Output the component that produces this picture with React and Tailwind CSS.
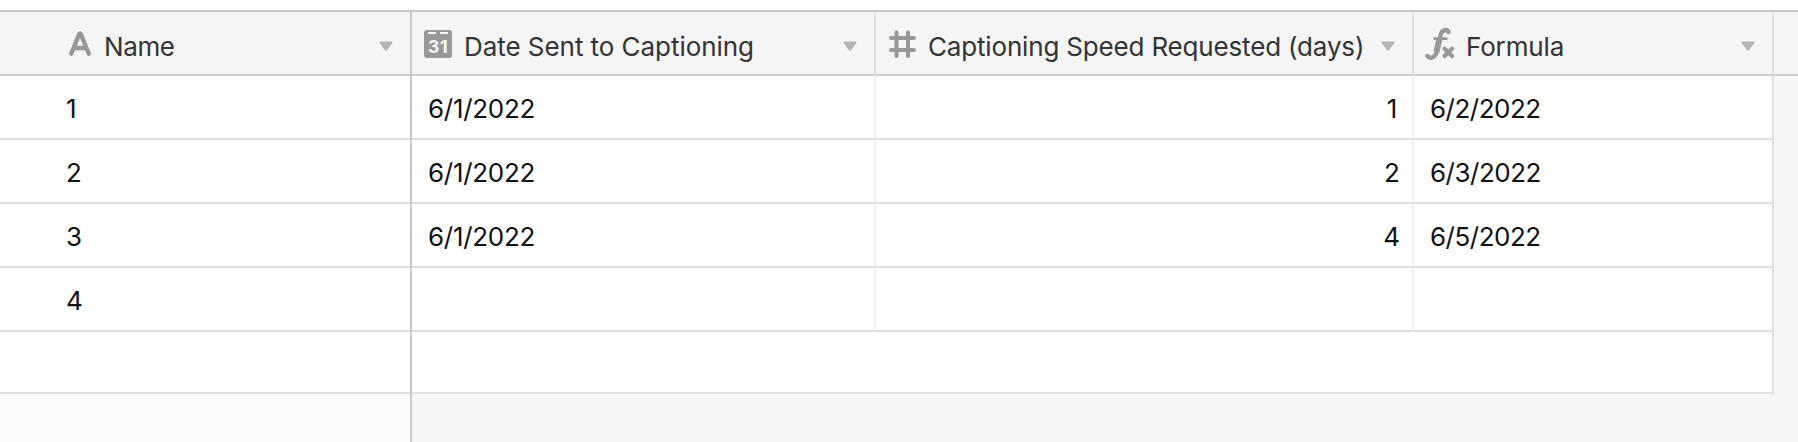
import React from "react";

const ICON_COLOR = "#989898";

function TextIcon() {
  return (
    <svg width="32" height="32" viewBox="0 0 32 32" fill="none" stroke={ICON_COLOR} strokeWidth="4.4" strokeLinecap="round" strokeLinejoin="round">
      <path d="M7.2 27.6 L15.2 8.2 Q16 6.8 16.8 8.2 L24.8 27.6 M10 22 H22" />
    </svg>
  );
}

function DateIcon() {
  return (
    <div className="relative mt-1 flex h-7 w-7 items-end justify-center rounded-[3px] bg-[#989898]">
      <span className="absolute left-1 top-0.5 h-0.5 w-2 bg-neutral-100" />
      <span className="absolute right-1 top-0.5 h-0.5 w-2 bg-neutral-100" />
      <span className="text-[18px] leading-[22px] font-bold tracking-[0.5px] text-neutral-100">31</span>
    </div>
  );
}

function NumberIcon() {
  return (
    <svg width="28" height="32" viewBox="0 0 28 32" fill="none" stroke={ICON_COLOR} strokeWidth="4" strokeLinecap="round">
      <path d="M8.5 6.5 V30 M20 6.5 V30 M3 12 H26 M3 24 H26" />
    </svg>
  );
}

function FormulaIcon() {
  return (
    <svg className="overflow-visible" width="32" height="34" viewBox="0 0 32 34" fill="none" stroke={ICON_COLOR} strokeLinecap="round">
      <path d="M22.6 6 C21.5 3 16.2 3 14.6 9 L11.2 24.5 C9.5 32.5 3.2 33.2 1.4 30" strokeWidth="4.4" />
      <path d="M13.4 13 L10.4 26" strokeWidth="6" strokeLinecap="butt" />
      <path d="M8.4 12.6 H20.4" strokeWidth="2.6" />
      <path d="M18.6 22.8 L26 30 M26 22.8 L18.6 30" strokeWidth="4.2" />
    </svg>
  );
}

function HeaderCell({ icon, label, className }) {
  return (
    <div className={`flex h-16 shrink-0 border-b-2 border-b-[#cfcfcf] bg-neutral-100 ${className}`}>
      <div className="flex w-8 shrink-0 pt-3.5">{icon}</div>
      <span className="ml-2 pt-[19px] text-[26px] leading-8 whitespace-nowrap text-[#333]">{label}</span>
      <svg className="mt-[29px] mr-[17px] ml-auto shrink-0" width="14" height="11" viewBox="0 0 14 11" fill="#b4b4b4">
        <path d="M1.5 0.5 H12.5 Q14 0.8 13 2.2 L8 9.2 Q7 10.4 6 9.2 L1 2.2 Q0 0.8 1.5 0.5" />
      </svg>
    </div>
  );
}

const rows = [
  { name: "1", sent: "6/1/2022", days: "1", formula: "6/2/2022" },
  { name: "2", sent: "6/1/2022", days: "2", formula: "6/3/2022" },
  { name: "3", sent: "6/1/2022", days: "4", formula: "6/5/2022" },
  { name: "4", sent: "", days: "", formula: "" },
];

const cell = "h-16 shrink-0 border-b-2 border-b-[#dfe1e1] pt-[17px] leading-8";

export default function App() {
  return (
    <div className="flex h-[442px] w-[1798px] flex-col overflow-hidden bg-white pt-2.5 font-['Inter',sans-serif]">
      <div className="flex flex-1 border-t-2 border-[#c8c8c8]">
        <div className="flex w-[412px] shrink-0 flex-col border-r-2 border-[#c8c8c8] bg-[#fcfcfc]">
          <HeaderCell icon={<TextIcon />} label="Name" className="w-[410px] pl-16 tracking-[-0.4px]" />
          {rows.map((row) => (
            <div key={row.name} className={`${cell} bg-white pl-[66px] text-[26px] text-[#111]`}>{row.name}</div>
          ))}
          <div className="h-[62px] border-b-2 border-[#dfe1e1] bg-white" />
        </div>

        <div className="flex flex-1 flex-col bg-[#f6f6f6]">
          <div className="flex">
            <HeaderCell icon={<DateIcon />} label="Date Sent to Captioning" className="w-[464px] border-r-2 border-r-[#dfe1e1] pl-3 tracking-[-0.05px]" />
            <HeaderCell icon={<NumberIcon />} label="Captioning Speed Requested (days)" className="w-[538px] border-r-2 border-r-[#dfe1e1] pl-3 tracking-[-0.17px]" />
            <HeaderCell icon={<FormulaIcon />} label="Formula" className="w-[360px] border-r-2 border-r-[#dfe1e1] pl-3 tracking-[-0.15px]" />
            <div className="h-16 flex-1 border-b-2 border-[#cfcfcf] bg-neutral-100" />
          </div>
          <div className="w-[1362px] border-r-2 border-[#dfe1e1] bg-white text-[26px] text-[#111]">
            {rows.map((row) => (
              <div key={row.name} className="flex">
                <div className={`${cell} w-[464px] border-r-2 border-r-[#f0f0f0] pl-4 tracking-[-0.3px]`}>{row.sent}</div>
                <div className={`${cell} flex w-[538px] justify-end border-r-2 border-r-[#f0f0f0] pr-3`}>
                  <span className="min-w-4 text-center">{row.days}</span>
                </div>
                <div className={`${cell} w-[358px] pl-4 tracking-[-0.5px]`}>{row.formula}</div>
              </div>
            ))}
            <div className="h-[62px] border-b-2 border-[#dfe1e1]" />
          </div>
        </div>
      </div>
    </div>
  );
}
